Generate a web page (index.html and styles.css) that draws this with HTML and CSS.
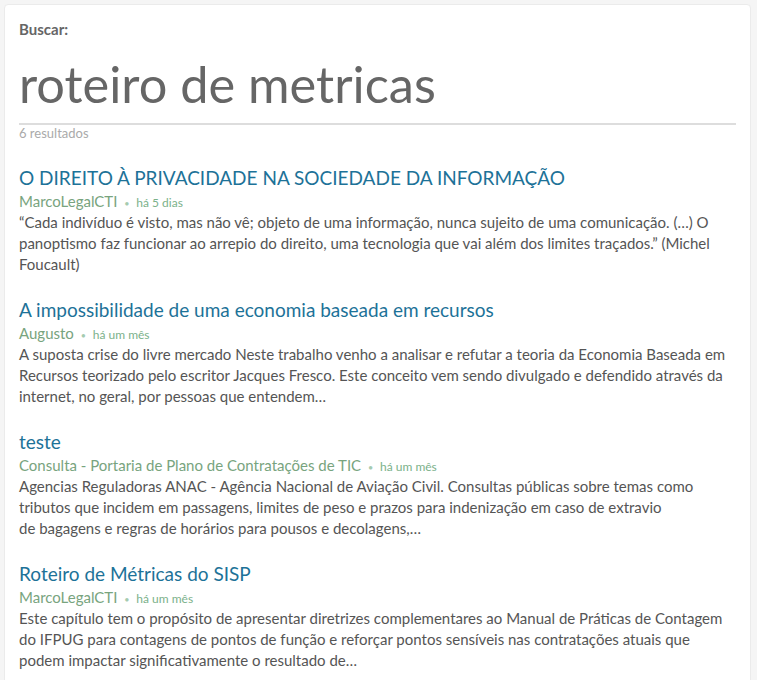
FILE: index.html
```html
<!DOCTYPE html>
<html lang="pt-BR">
<head>
    <meta charset="UTF-8">
    <meta name="viewport" content="width=device-width, initial-scale=1.0">
    <title>Buscar: roteiro de metricas</title>
    <link rel="stylesheet" href="styles.css">
</head>
<body>

    <div class="card">
        <header class="search-header">
            <div class="search-label">Buscar:</div>
            <h1 class="search-term">roteiro de metricas</h1>
            <div class="result-count">6 resultados</div>
        </header>

        <main class="results">
            <article class="result">
                <h2 class="result-title"><a href="#">O DIREITO À PRIVACIDADE NA SOCIEDADE DA INFORMAÇÃO</a></h2>
                <div class="result-meta">
                    <span class="author">MarcoLegalCTI</span>
                    <span class="dot">•</span>
                    <span class="time">há 5 dias</span>
                </div>
                <p class="excerpt">“Cada indivíduo é visto, mas não vê; objeto de uma informação, nunca sujeito de uma comunicação. (…) O panoptismo faz funcionar ao arrepio do direito, uma tecnologia que vai além dos limites traçados.” (Michel Foucault)</p>
            </article>

            <article class="result">
                <h2 class="result-title"><a href="#">A impossibilidade de uma economia baseada em recursos</a></h2>
                <div class="result-meta">
                    <span class="author">Augusto</span>
                    <span class="dot">•</span>
                    <span class="time">há um mês</span>
                </div>
                <p class="excerpt">A suposta crise do livre mercado Neste trabalho venho a analisar e refutar a teoria da Economia Baseada em Recursos teorizado pelo escritor Jacques Fresco. Este conceito vem sendo divulgado e defendido através da internet, no geral, por pessoas que entendem…</p>
            </article>

            <article class="result">
                <h2 class="result-title"><a href="#">teste</a></h2>
                <div class="result-meta">
                    <span class="author">Consulta - Portaria de Plano de Contratações de TIC</span>
                    <span class="dot">•</span>
                    <span class="time">há um mês</span>
                </div>
                <p class="excerpt">Agencias Reguladoras ANAC - Agência Nacional de Aviação Civil. Consultas públicas sobre temas como tributos que incidem em passagens, limites de peso e prazos para indenização em caso de extravio<br>de bagagens e regras de horários para pousos e decolagens,…</p>
            </article>

            <article class="result">
                <h2 class="result-title"><a href="#">Roteiro de Métricas do SISP</a></h2>
                <div class="result-meta">
                    <span class="author">MarcoLegalCTI</span>
                    <span class="dot">•</span>
                    <span class="time">há um mês</span>
                </div>
                <p class="excerpt">Este capítulo tem o propósito de apresentar diretrizes complementares ao Manual de Práticas de Contagem do IFPUG para contagens de pontos de função e reforçar pontos sensíveis nas contratações atuais que podem impactar significativamente o resultado de…</p>
            </article>
        </main>
    </div>

</body>
</html>
```

FILE: styles.css
```css
/* 全局 */
body {
    font-family: Lato, "Open Sans", "Liberation Sans", sans-serif;
    background-color: #f5f5f5;
    color: #555;
    margin: 0;
    padding: 4px;
}

/* 卡片 */
.card {
    width: 747px;
    box-sizing: border-box;
    background: #fff;
    border: 1px solid #ebebeb;
    border-radius: 4px;
    padding: 14px 14px 0;
    min-height: 690px;
}

/* 搜索头部 */
.search-header {
    margin-bottom: 25px;
}
.search-label {
    font-size: 15px;
    font-weight: bold;
    color: #666;
    line-height: 20px;
}
.search-term {
    font-size: 50.5px;
    font-weight: normal;
    line-height: 62px;
    color: #666;
    margin: 14px 0 0;
    padding-bottom: 8px;
    border-bottom: 2px solid #ddd;
}
.result-count {
    font-size: 13px;
    color: #aaa;
    line-height: 16px;
}

/* 结果 */
.result {
    margin-bottom: 23px;
}
.result-title {
    margin: 0;
    font-size: 19px;
    font-weight: normal;
    line-height: 24px;
}
.result-title a {
    color: #1d7298;
    text-decoration: none;
}
.result-meta {
    font-size: 15px;
    line-height: 22px;
    height: 22px;
}
.author {
    color: #78a47e;
}
.dot {
    font-size: 9px;
    line-height: 1;
    color: #a5cbb0;
    margin: 0 3px;
}
.time {
    font-size: 12px;
    line-height: 1;
    color: #7bb18a;
}
.excerpt {
    margin: 0;
    font-size: 15px;
    line-height: 21px;
    color: #555;
}
```
